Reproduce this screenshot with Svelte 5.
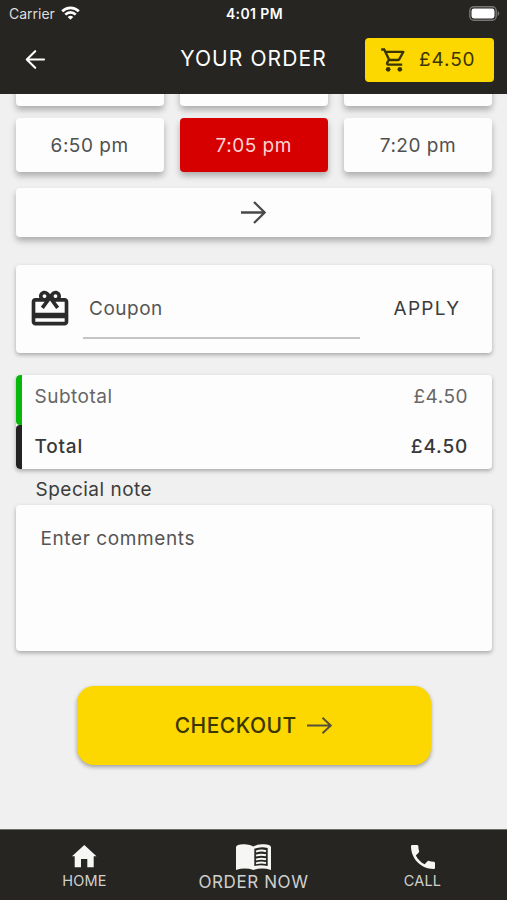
<script>
  // the first row is scrolled under the header, only its lower edge shows
  const slots = ["", "", "", "6:50 pm", "7:05 pm", "7:20 pm"];
  let selected = "7:05 pm";
  let coupon = "";
  let note = "";
  let price = 4.5;

  $: total = `£${price.toFixed(2)}`;
</script>

<div class="screen">
  <header>
    <div class="status">
      <div class="carrier">
        <span>Carrier</span>
        <svg width="19" height="14" viewBox="0 0 19 14" fill="none" stroke="#fff" stroke-width="2.7">
          <path d="M1.2 5.2a11.8 11.8 0 0 1 16.6 0" />
          <path d="M4.3 8.6a7.4 7.4 0 0 1 10.4 0" />
          <path d="M9.5 13.8L6.7 11a4 4 0 0 1 5.6 0z" fill="#fff" stroke="none" />
        </svg>
      </div>
      <div class="time">4:01 PM</div>
      <div class="power">
        <svg width="31" height="15" viewBox="0 0 31 15">
          <rect x=".8" y=".8" width="26.4" height="13.4" rx="4" fill="none" stroke="#777674" stroke-width="1.4" />
          <rect x="2.5" y="2.5" width="23" height="10" rx="2.4" fill="#fff" />
          <path d="M28.6 5v5q1.7-.8 1.7-2.5T28.6 5z" fill="#777674" />
        </svg>
      </div>
    </div>
    <div class="bar">
      <button class="back" aria-label="Back">
        <svg width="22" height="22" viewBox="0 0 22 22" fill="none" stroke="#fff" stroke-width="2.1" stroke-linecap="round" stroke-linejoin="round">
          <path d="M19 10.500H2M10.200 2.200L1.800 10.500l8.400 8.300" />
        </svg>
      </button>
      <h1>YOUR ORDER</h1>
      <button class="cart">
        <svg width="28" height="28" viewBox="0 0 24 24" fill="#3a3500">
          <path d="M15.550 13c.750 0 1.410-.410 1.750-1.030l3.580-6.490A.996.996 0 0 0 20.010 4H5.210l-.940-2H1v2h2l3.600 7.590-1.350 2.440C4.520 15.370 5.480 17 7 17h12v-2H7l1.100-2h7.450zM6.160 6h12.150l-2.760 5H8.530L6.160 6z" />
          <circle cx="7" cy="20" r="2" />
          <circle cx="17" cy="20" r="2" />
        </svg>
        <span>{total}</span>
      </button>
    </div>
  </header>

  <main>
    <div class="slots">
      {#each slots as slot}
        <button class="card slot" class:selected={slot === selected} on:click={() => (selected = slot)}>
          {slot}
        </button>
      {/each}
    </div>
    <button class="card next" aria-label="Later times">
      <svg width="26" height="24" viewBox="0 0 26 24" fill="none" stroke="#484848" stroke-width="2.3">
        <path d="M1 11.500h24M14 1L24.700 11.500 14 22" />
      </svg>
    </button>

    <form class="card coupon" on:submit|preventDefault>
      <svg width="44" height="44" viewBox="0 0 24 24" fill="#2b2b2b">
        <path d="M20 6h-2.180c.110-.310.180-.650.180-1 0-1.660-1.340-3-3-3-1.050 0-1.960.540-2.500 1.350l-.500.670-.500-.680C10.960 2.540 10.050 2 9 2 7.340 2 6 3.340 6 5c0 .350.070.690.180 1H4c-1.110 0-1.990.890-1.990 2L2 19c0 1.110.890 2 2 2h16c1.110 0 2-.890 2-2V8c0-1.110-.890-2-2-2zm-5-2c.550 0 1 .450 1 1s-.450 1-1 1-1-.450-1-1 .450-1 1-1zM9 4c.550 0 1 .450 1 1s-.450 1-1 1-1-.450-1-1 .450-1 1-1zm11 15H4v-2h16v2zm0-5H4V8h5.080L7 10.830 8.620 12 11 8.760l1-1.360 1 1.360L15.380 12 17 10.830 14.920 8H20v6z" />
      </svg>
      <input placeholder="Coupon" bind:value={coupon} />
      <button class="apply">APPLY</button>
    </form>

    <div class="card totals">
      <div class="row subtotal"><span>Subtotal</span><span>{total}</span></div>
      <div class="row total"><span>Total</span><span>{total}</span></div>
    </div>

    <label for="note">Special note</label>
    <textarea id="note" class="card" placeholder="Enter comments" bind:value={note}></textarea>

    <button class="checkout">
      <span>CHECKOUT</span>
      <svg width="26" height="18" viewBox="0 0 26 18" fill="none" stroke="#55503c" stroke-width="1.9">
        <path d="M0 8.500h24M15.500.7l8.300 7.800-8.300 7.800" />
      </svg>
    </button>
  </main>

  <nav>
    <a href="#home">
      <svg width="25" height="23" viewBox="0 0 25 23" fill="#f6f6f4">
        <path d="M12.300 0L0 11.300h2.700v11H9V14h6.300v8.300h6.400v-11h2.800z" />
      </svg>
      <span>HOME</span>
    </a>
    <a href="#order" class="order">
      <svg width="35" height="27" viewBox="0 0 35 27">
        <path d="M0 3Q1-.2 9 .3q5.500.2 8.500 2.200Q20.500.5 26 .3q8-.5 9 2.700V26q-9-2.800-17.500 0-8.500-2.800-17.500 0z" fill="#f6f6f4" />
        <path d="M18.300 4.800q6.700-2.700 13.400-.8V22q-6.700-1.300-13.400 0z" fill="#262522" />
        <path d="M20 7.600q5-2 10-.4M20 11.600q5-1.700 10-.3M20 15.600q5-1.700 10-.3M20 19.400q5-1.500 10-.3" fill="none" stroke="#f6f6f4" stroke-width="2" />
      </svg>
      <span>ORDER NOW</span>
    </a>
    <a href="#call">
      <svg width="24" height="24" viewBox="3 3 18 18" fill="#f6f6f4">
        <path d="M6.620 10.790c1.440 2.830 3.760 5.140 6.590 6.590l2.200-2.200c.270-.270.670-.360 1.020-.240 1.120.370 2.330.570 3.570.570.550 0 1 .450 1 1V20c0 .550-.450 1-1 1-9.390 0-17-7.610-17-17 0-.550.450-1 1-1h3.500c.550 0 1 .450 1 1 0 1.250.200 2.450.570 3.570.110.350.030.740-.250 1.020l-2.200 2.200z" />
      </svg>
      <span>CALL</span>
    </a>
  </nav>
</div>

<style>
  :global(body) {
    margin: 0;
  }

  .screen {
    display: flex;
    flex-direction: column;
    height: 900px;
    overflow: hidden;
    background: #f0f0f0;
    color: #3c3c3c;
    font-family: Inter, "Liberation Sans", sans-serif;
    font-size: 19px;
    letter-spacing: 0.5px;
  }

  .screen * {
    box-sizing: border-box;
  }

  svg {
    display: block;
    flex: none;
  }

  button,
  input,
  textarea {
    border: 0;
    padding: 0;
    margin: 0;
    background: none;
    font: inherit;
    color: inherit;
    letter-spacing: inherit;
    outline: none;
  }

  header {
    height: 94px;
    flex: none;
    background: #262522;
    color: #fff;
    position: relative;
    z-index: 1;
  }

  .status {
    height: 27px;
    padding: 0 7px 0 9px;
    display: grid;
    grid-template-columns: 1fr auto 1fr;
    align-items: center;
    font-size: 14px;
    letter-spacing: 0;
  }

  .carrier {
    display: flex;
    align-items: center;
    gap: 6px;
    color: #dededd;
  }

  .carrier svg {
    margin-top: -1px;
  }

  .time {
    font-weight: 600;
    font-size: 14px;
    letter-spacing: 0.4px;
  }

  .power {
    display: flex;
    justify-content: flex-end;
  }

  .bar {
    height: 65px;
    padding: 0 13px 0 25px;
    display: grid;
    grid-template-columns: 117px 1fr 129px;
    align-items: center;
  }

  h1 {
    margin: -2px 0 0;
    font-size: 21px;
    font-weight: 400;
    letter-spacing: 1.100px;
    text-align: center;
  }

  .cart {
    display: flex;
    align-items: center;
    gap: 11px;
    width: 129px;
    height: 44px;
    padding-left: 15px;
    border-radius: 4px;
    background: #fdd700;
    color: #3a3500;
    letter-spacing: 0.900px;
  }

  main {
    flex: 1;
    min-height: 0;
    overflow: hidden;
    padding: 0 15px 0 15.500px;
    display: flex;
    flex-direction: column;
  }

  .card {
    background: #fdfdfd;
    border-radius: 4px;
    box-shadow: 0 2px 4px rgba(0, 0, 0, 0.3);
    flex: none;
  }

  .slots {
    display: grid;
    grid-template-columns: repeat(3, 1fr);
    gap: 12px 16px;
    margin-top: -42px;
  }

  .slot {
    height: 54px;
    color: #505050;
  }

  .slot,
  .next {
    box-shadow: 0 4px 6px rgba(0, 0, 0, 0.28);
  }

  .selected {
    background: #d60000;
    color: #fbd5d5;
  }

  .next {
    display: flex;
    align-items: center;
    justify-content: center;
    height: 49px;
    margin: 16px 1px 0 0;
  }

  .coupon {
    display: flex;
    align-items: center;
    height: 88px;
    margin-top: 28px;
    padding-left: 12px;
  }

  input {
    width: 277px;
    height: 59px;
    margin: 0 34px 0 11px;
    padding: 0 6.500px;
    border-bottom: 2px solid #c4c4c4;
  }

  ::placeholder {
    color: #555;
    opacity: 1;
  }

  .apply {
    margin-top: -1px;
    letter-spacing: 1.300px;
  }

  .totals {
    height: 94px;
    margin-top: 22px;
    overflow: hidden;
  }

  .row {
    display: flex;
    justify-content: space-between;
    height: 50px;
    padding: 0 24px 0 13px;
    border-left: 6px solid #07b80b;
    border-radius: 4px 0 0 4px;
    line-height: 43px;
    color: #666;
  }

  .total {
    height: 44px;
    border-color: #222;
    color: #383838;
    font-weight: 500;
    letter-spacing: 0.800px;
  }

  label {
    height: 36px;
    padding-left: 20px;
    line-height: 41px;
    flex: none;
  }

  textarea {
    height: 146px;
    padding: 21px 25px;
    resize: none;
    line-height: 25px;
    letter-spacing: 0.600px;
  }

  .checkout {
    display: flex;
    align-items: center;
    justify-content: center;
    gap: 10px;
    width: 354px;
    height: 79px;
    margin: 35px auto 0;
    border-radius: 17px;
    background: #fdd700;
    color: #3b3500;
    font-size: 21px;
    font-weight: 500;
    box-shadow: 0 2px 4px rgba(0, 0, 0, 0.35);
    flex: none;
  }

  nav {
    flex: none;
    height: 71px;
    border-top: 1px solid #6d6d69;
    background: #262522;
    display: grid;
    grid-template-columns: repeat(3, 1fr);
    font-size: 14.500px;
    letter-spacing: 0.200px;
  }

  nav a {
    display: flex;
    flex-direction: column;
    align-items: center;
    padding-top: 15px;
    color: #d0d0ce;
    text-decoration: none;
    line-height: 20px;
  }

  nav span {
    margin-top: auto;
    margin-bottom: 9px;
  }

  .order {
    padding-top: 14px;
    font-size: 17px;
    letter-spacing: 0.600px;
  }

  .order span {
    margin-bottom: 8px;
  }
</style>
